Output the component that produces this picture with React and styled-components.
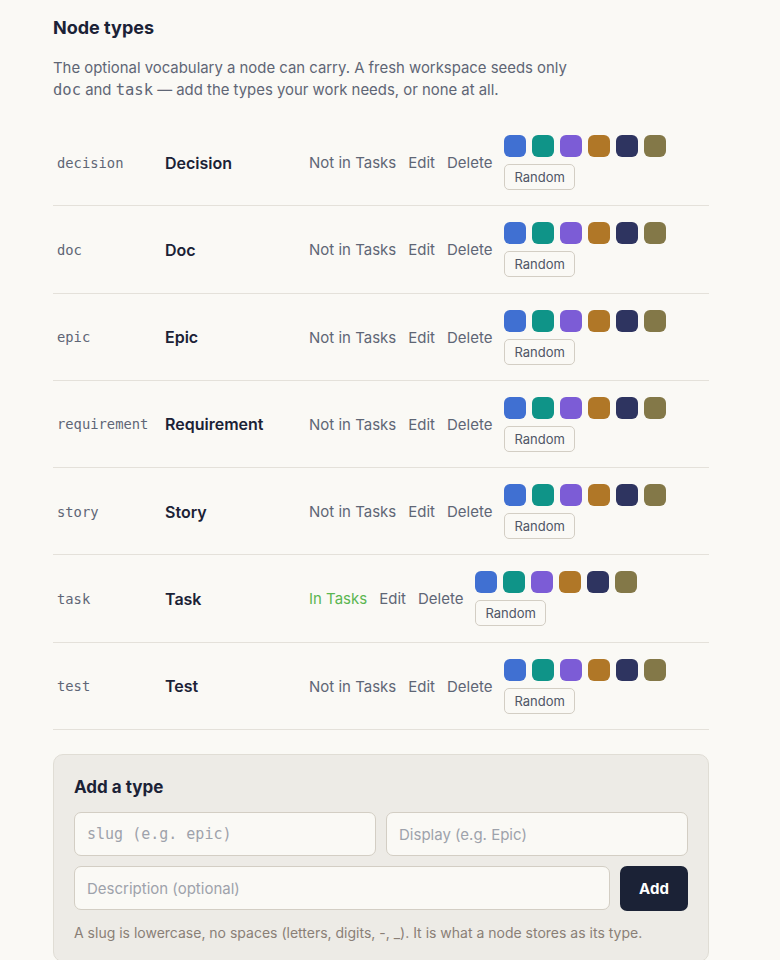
import React from 'react';
import styled, {createGlobalStyle} from 'styled-components';

const GlobalStyle = createGlobalStyle`
  html, body {
    margin: 0;
    background: #faf9f5;
  }
  body {
    font-family: Inter, "Noto Sans", sans-serif;
    color: #1b2236;
  }
`;

const Page = styled.div`
  padding: 17px 71px 0 53px;
`;

const Title = styled.h2`
  margin: 0;
  font-size: 18px;
  font-weight: 700;
  line-height: 22px;
  color: #1b2236;
`;

const Intro = styled.p`
  margin: 18px 0 0;
  max-width: 530px;
  font-size: 14.9px;
  line-height: 22px;
  color: #5f6675;
`;

const Code = styled.code`
  font-family: "DejaVu Sans Mono", monospace;
  font-size: 15.5px;
`;

const Table = styled.div`
  margin-top: 18px;
`;

const Row = styled.div`
  display: grid;
  grid-template-columns: 108px 144px 1fr;
  align-items: center;
  padding: 16px 0 15.3px 4px;
  border-bottom: 1px solid #e4e1da;
`;

const Slug = styled.span`
  font-family: "DejaVu Sans Mono", monospace;
  font-size: 13.8px;
  color: #5f6675;
`;

const Name = styled.span`
  font-size: 16px;
  font-weight: 600;
  color: #1b2236;
`;

const Actions = styled.div`
  display: flex;
  align-items: center;
  gap: 12px;
  font-size: 15px;
  color: #5f6675;
`;

const Link = styled.span`
  color: ${p => (p.$on ? '#5bb650' : '#5f6675')};
`;

const Palette = styled.div`
  display: flex;
  flex-direction: column;
  align-items: flex-start;
  gap: 7px;
`;

const Swatches = styled.div`
  display: flex;
  gap: 6px;
`;

const Swatch = styled.span`
  width: 22px;
  height: 22px;
  border-radius: 6px;
  background: ${p => p.$c};
`;

const RandomButton = styled.button`
  height: 26px;
  padding: 0 9px;
  border: 1px solid #d3cec4;
  border-radius: 5px;
  background: #faf9f5;
  font-family: Inter, sans-serif;
  font-size: 13px;
  color: #4f5666;
`;

const Card = styled.div`
  margin-top: 24px;
  padding: 21px 20px 18px;
  background: #edebe6;
  border: 1px solid #e0ddd5;
  border-radius: 10px;
`;

const CardTitle = styled.h3`
  margin: 0;
  font-size: 17px;
  font-weight: 700;
  line-height: 22px;
`;

const FieldRow = styled.div`
  display: grid;
  grid-template-columns: ${p => p.$cols};
  gap: 10px;
  margin-top: ${p => p.$mt}px;
`;

const Input = styled.input`
  box-sizing: border-box;
  height: 44px;
  padding: 0 12px;
  border: 1px solid #d3cec4;
  border-radius: 7px;
  background: #faf9f5;
  font-family: ${p => (p.$mono ? '"DejaVu Sans Mono", monospace' : 'Inter, sans-serif')};
  font-size: 15px;
  color: #1b2236;
  &::placeholder {
    color: #9ea2ab;
  }
`;

const AddButton = styled.button`
  height: 45px;
  border: none;
  border-radius: 7px;
  background: #1b2236;
  color: #fff;
  font-family: Inter, sans-serif;
  font-size: 15px;
  font-weight: 700;
`;

const Hint = styled.p`
  margin: 12px 0 0;
  font-size: 14px;
  line-height: 20px;
  color: #8a7f76;
`;

const colors = ['#4070d2', '#0f9488', '#7c5cd6', '#b07727', '#2e3460', '#837848'];

const types = [
  {slug: 'decision', name: 'Decision'},
  {slug: 'doc', name: 'Doc'},
  {slug: 'epic', name: 'Epic'},
  {slug: 'requirement', name: 'Requirement'},
  {slug: 'story', name: 'Story'},
  {slug: 'task', name: 'Task', inTasks: true},
  {slug: 'test', name: 'Test'},
];

const TypeRow = ({slug, name, inTasks}) => (
  <Row>
    <Slug>{slug}</Slug>
    <Name>{name}</Name>
    <Actions>
      <Link $on={inTasks}>{inTasks ? 'In Tasks' : 'Not in Tasks'}</Link>
      <Link>Edit</Link>
      <Link>Delete</Link>
      <Palette>
        <Swatches>
          {colors.map(c => <Swatch key={c} $c={c} />)}
        </Swatches>
        <RandomButton type="button">Random</RandomButton>
      </Palette>
    </Actions>
  </Row>
);

export default function App() {
  return (
    <Page>
      <GlobalStyle />
      <Title>Node types</Title>
      <Intro>
        The optional vocabulary a node can carry. A fresh workspace seeds only{' '}
        <Code>doc</Code> and <Code>task</Code> — add the types your work needs, or none at all.
      </Intro>
      <Table>
        {types.map(t => <TypeRow key={t.slug} {...t} />)}
      </Table>
      <Card>
        <CardTitle>Add a type</CardTitle>
        <FieldRow $cols="1fr 1fr" $mt={14}>
          <Input $mono placeholder="slug (e.g. epic)" />
          <Input placeholder="Display (e.g. Epic)" />
        </FieldRow>
        <FieldRow $cols="1fr 68px" $mt={10}>
          <Input placeholder="Description (optional)" />
          <AddButton type="button">Add</AddButton>
        </FieldRow>
        <Hint>A slug is lowercase, no spaces (letters, digits, -, _). It is what a node stores as its type.</Hint>
      </Card>
    </Page>
  );
}
